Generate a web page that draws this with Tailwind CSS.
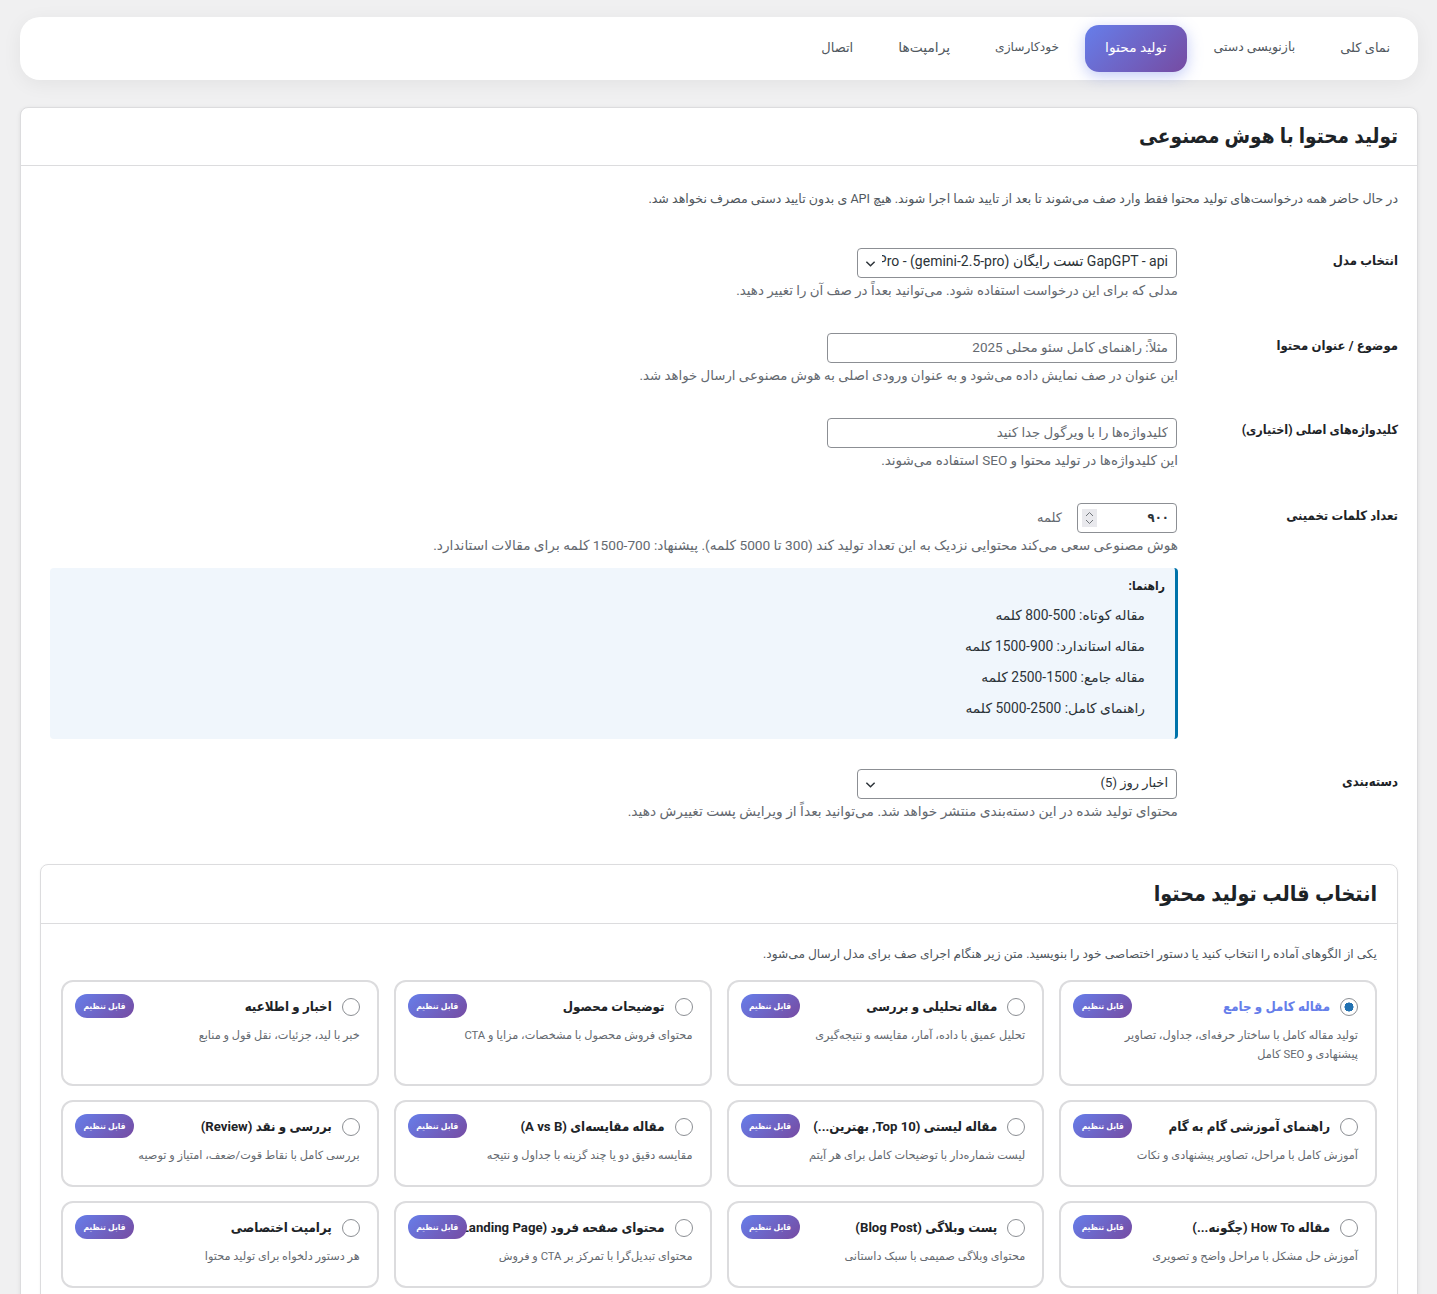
<!DOCTYPE html>
<html lang="fa" dir="rtl">
<head>
    <meta charset="UTF-8">
    <title>تولید محتوا با هوش مصنوعی</title>
    <script src="https://cdn.jsdelivr.net/npm/@tailwindcss/browser@4"></script>
</head>
<body class="bg-[#f0f0f1] h-[1294px] overflow-hidden font-['Roboto','DejaVu_Sans',sans-serif] text-[13px] text-[#3c434a]">
    <div class="pt-[17px] pr-[19px] pl-5">

        <!-- تب‌ها -->
        <nav class="bg-white rounded-[20px] p-2 h-[63px] flex gap-[5px] shadow-[0_4px_20px_rgba(0,0,0,0.06)]">
            <a class="px-5 pb-[2px] h-[47px] flex items-center text-[13px] text-[#50575e]">نمای کلی</a>
            <a class="px-5 pb-[2px] h-[47px] flex items-center text-[12.5px] text-[#50575e]">بازنویسی دستی</a>
            <a class="mr-[2px] ml-px px-5 pb-[2px] h-[47px] flex items-center text-[13.8px] text-white rounded-[14px] bg-[linear-gradient(135deg,#667eea,#764ba2)] shadow-[0_4px_15px_rgba(102,126,234,0.4)]">تولید محتوا</a>
            <a class="px-5 pb-[2px] h-[47px] flex items-center text-[12.2px] text-[#50575e]">خودکارسازی</a>
            <a class="px-5 pb-[2px] h-[47px] flex items-center text-[13.8px] text-[#50575e]">پرامپت‌ها</a>
            <a class="px-5 pb-[2px] h-[47px] flex items-center text-[13px] text-[#50575e]">اتصال</a>
        </nav>

        <!-- کارت اصلی -->
        <main class="mt-[27px] bg-white border border-[#dcdcde] rounded-lg shadow-[0_1px_4px_rgba(0,0,0,0.08)] h-[1300px]">
            <header class="h-[58px] pr-[19px] flex items-center border-b border-[#dcdcde]">
                <h2 class="text-[20.6px] font-bold font-['Roboto','DejaVu_Sans_Condensed','DejaVu_Sans',sans-serif] text-[#1d2327]">تولید محتوا با هوش مصنوعی</h2>
            </header>

            <div class="px-[19px]">
                <p class="mt-6 h-[18px] leading-[18px] text-[12.6px] text-[#50575e]">در حال حاضر همه درخواست‌های تولید محتوا فقط وارد صف می‌شوند تا بعد از تایید شما اجرا شوند. هیچ API ی بدون تایید دستی مصرف نخواهد شد.</p>

                <!-- مدل -->
                <div class="mt-[40px] flex">
                    <label class="w-[220px] shrink-0 pt-[3px] text-[13px] font-bold font-['Roboto','DejaVu_Sans_Condensed','DejaVu_Sans',sans-serif] text-[#1d2327]">انتخاب مدل</label>
                    <div class="flex-1 pl-[10px]">
                        <div class="relative w-[320px] mr-px">
                            <select class="appearance-none w-full h-[30px] pb-[3px] border border-[#8c8f94] rounded bg-white pr-2 pl-6 text-[14px] text-[#2c3338]">
                                <option>GapGPT - api تست رایگان Gemini 2.5 Pro - (gemini-2.5-pro)</option>
                            </select>
                            <svg class="absolute left-2 top-[10px] w-[11px] h-[11px] text-[#2c3338]" viewBox="0 0 12 12" fill="none" stroke="currentColor" stroke-width="1.6"><path d="M1.5 4 6 8.500 10.500 4"/></svg>
                        </div>
                        <p class="mt-1 h-[18px] leading-[18px] text-[13.4px] text-[#646970]">مدلی که برای این درخواست استفاده شود. می‌توانید بعداً در صف آن را تغییر دهید.</p>
                    </div>
                </div>

                <!-- موضوع -->
                <div class="mt-[33px] flex">
                    <label class="w-[220px] shrink-0 pt-[3px] text-[13px] font-bold font-['Roboto','DejaVu_Sans_Condensed','DejaVu_Sans',sans-serif] text-[#1d2327]">موضوع / عنوان محتوا</label>
                    <div class="flex-1 pl-[10px]">
                        <input type="text" placeholder="مثلاً: راهنمای کامل سئو محلی 2025" class="block w-[350px] mr-px h-[30px] px-2 pb-[3px] border border-[#8c8f94] rounded bg-white text-[13.5px] placeholder:text-[#646970]">
                        <p class="mt-1 h-[18px] leading-[18px] text-[13.3px] text-[#646970]">این عنوان در صف نمایش داده می‌شود و به عنوان ورودی اصلی به هوش مصنوعی ارسال خواهد شد.</p>
                    </div>
                </div>

                <!-- کلیدواژه -->
                <div class="mt-[33px] flex">
                    <label class="w-[220px] shrink-0 pt-[3px] text-[12.5px] font-bold font-['Roboto','DejaVu_Sans_Condensed','DejaVu_Sans',sans-serif] text-[#1d2327]">کلیدواژه‌های اصلی (اختیاری)</label>
                    <div class="flex-1 pl-[10px]">
                        <input type="text" placeholder="کلیدواژه‌ها را با ویرگول جدا کنید" class="block w-[350px] mr-px h-[30px] px-2 pb-[2px] border border-[#8c8f94] rounded bg-white text-[13.3px] placeholder:text-[#646970]">
                        <p class="mt-[3px] h-[18px] leading-[18px] text-[13.5px] text-[#646970]">این کلیدواژه‌ها در تولید محتوا و SEO استفاده می‌شوند.</p>
                    </div>
                </div>

                <!-- تعداد کلمات -->
                <div class="mt-[34px] flex">
                    <label class="w-[220px] shrink-0 pt-[3px] text-[13px] font-bold font-['Roboto','DejaVu_Sans_Condensed','DejaVu_Sans',sans-serif] text-[#1d2327]">تعداد کلمات تخمینی</label>
                    <div class="flex-1 pl-[10px]">
                        <div class="flex items-center gap-[15px] mr-px">
                            <div class="w-[100px] h-[30px] border border-[#8c8f94] rounded bg-white flex items-center justify-between pr-[7px] pl-1">
                                <span class="text-[13px] font-bold font-['Roboto','DejaVu_Sans_Condensed','DejaVu_Sans',sans-serif] text-[#2c3338]">۹۰۰</span>
                                <span class="w-[15px] h-[18px] bg-[#e9e9ed] flex flex-col items-center justify-center gap-[2px]">
                                    <svg class="w-[9px] h-[6px]" viewBox="0 0 9 6" fill="none" stroke="#70757a" stroke-width="1"><path d="M1 5 4.500 1.500 8 5"/></svg>
                                    <svg class="w-[9px] h-[6px]" viewBox="0 0 9 6" fill="none" stroke="#70757a" stroke-width="1"><path d="M1 1 4.500 4.500 8 1"/></svg>
                                </span>
                            </div>
                            <span class="text-[13px] text-[#646970]">کلمه</span>
                        </div>
                        <p class="mt-[3px] h-[18px] leading-[18px] text-[13.7px] text-[#646970] whitespace-nowrap">هوش مصنوعی سعی می‌کند محتوایی نزدیک به این تعداد تولید کند (300 تا 5000 کلمه). پیشنهاد: 700-1500 کلمه برای مقالات استاندارد.</p>
                        <div class="mt-[14px] h-[171px] bg-[#f0f6fc] border-r-[3px] border-[#0073aa] rounded pr-[10px] pt-[9px] text-[13.8px] text-[#2c3338]">
                            <strong class="block h-[18px] leading-[18px] text-[12px] font-['Roboto','DejaVu_Sans_Condensed','DejaVu_Sans',sans-serif] text-[#1d2327]">راهنما:</strong>
                            <ul class="mr-5 mt-[5px]">
                                <li class="h-[31px] leading-[31px]">مقاله کوتاه: 500-800 کلمه</li>
                                <li class="h-[31px] leading-[31px]">مقاله استاندارد: 900-1500 کلمه</li>
                                <li class="h-[31px] leading-[31px]">مقاله جامع: 1500-2500 کلمه</li>
                                <li class="h-[31px] leading-[31px]">راهنمای کامل: 2500-5000 کلمه</li>
                            </ul>
                        </div>
                    </div>
                </div>

                <!-- دسته‌بندی -->
                <div class="mt-[30px] flex">
                    <label class="w-[220px] shrink-0 pt-[3px] text-[13px] font-bold font-['Roboto','DejaVu_Sans_Condensed','DejaVu_Sans',sans-serif] text-[#1d2327]">دسته‌بندی</label>
                    <div class="flex-1 pl-[10px]">
                        <div class="relative w-[320px] mr-px">
                            <select class="appearance-none w-full h-[30px] pb-[2px] border border-[#8c8f94] rounded bg-white pr-2 pl-6 text-[13px] text-[#2c3338]">
                                <option>اخبار روز (5)</option>
                            </select>
                            <svg class="absolute left-2 top-[10px] w-[11px] h-[11px] text-[#2c3338]" viewBox="0 0 12 12" fill="none" stroke="currentColor" stroke-width="1.6"><path d="M1.5 4 6 8.500 10.500 4"/></svg>
                        </div>
                        <p class="mt-[3px] h-[18px] leading-[18px] text-[13.8px] text-[#646970]">محتوای تولید شده در این دسته‌بندی منتشر خواهد شد. می‌توانید بعداً از ویرایش پست تغییرش دهید.</p>
                    </div>
                </div>

                <!-- انتخاب قالب -->
                <section class="mt-[44px] border border-[#dcdcde] rounded-lg shadow-[0_1px_3px_rgba(0,0,0,0.05)]">
                    <header class="h-[59px] px-5 flex items-center border-b border-[#dcdcde]">
                        <h3 class="text-[21.4px] font-bold font-['Roboto','DejaVu_Sans_Condensed','DejaVu_Sans',sans-serif] text-[#1d2327]">انتخاب قالب تولید محتوا</h3>
                    </header>
                    <div class="px-5 pb-5">
                        <p class="mt-[21px] h-[18px] leading-[18px] text-[12.2px] text-[#50575e]">یکی از الگوهای آماده را انتخاب کنید یا دستور اختصاصی خود را بنویسید. متن زیر هنگام اجرای صف برای مدل ارسال می‌شود.</p>
                        <div id="templates" class="mt-[17px] grid grid-cols-4 gap-x-[15px] gap-y-[14.5px]"></div>
                    </div>
                </section>
            </div>
        </main>
    </div>

    <script>
        // قالب‌های تولید محتوا
        const templates = [
            ['مقاله کامل و جامع', 'تولید مقاله کامل با ساختار حرفه‌ای، جداول، تصاویر پیشنهادی و SEO کامل'],
            ['مقاله تحلیلی و بررسی', 'تحلیل عمیق با داده، آمار، مقایسه و نتیجه‌گیری'],
            ['توضیحات محصول', 'محتوای فروش محصول با مشخصات، مزایا و CTA'],
            ['اخبار و اطلاعیه', 'خبر با لید، جزئیات، نقل قول و منابع'],
            ['راهنمای آموزشی گام به گام', 'آموزش کامل با مراحل، تصاویر پیشنهادی و نکات'],
            ['مقاله لیستی (Top 10, بهترین...)', 'لیست شماره‌دار با توضیحات کامل برای هر آیتم'],
            ['مقاله مقایسه‌ای (A vs B)', 'مقایسه دقیق دو یا چند گزینه با جداول و نتیجه'],
            ['بررسی و نقد (Review)', 'بررسی کامل با نقاط قوت/ضعف، امتیاز و توصیه'],
            ['مقاله How To (چگونه...)', 'آموزش حل مشکل با مراحل واضح و تصویری'],
            ['پست وبلاگی (Blog Post)', 'محتوای وبلاگی صمیمی با سبک داستانی'],
            ['محتوای صفحه فرود (Landing Page)', 'محتوای تبدیل‌گرا با تمرکز بر CTA و فروش'],
            ['پرامپت اختصاصی', 'هر دستور دلخواه برای تولید محتوا']
        ];

        document.getElementById('templates').innerHTML = templates.map(([title, desc], i) => `
            <label class="relative min-h-[86px] border-2 border-[#dcdcde] rounded-xl bg-white pt-[15px] pr-[17px] pl-4 pb-[19.5px]">
                <span class="flex items-center gap-[10px] h-5 text-[13.2px] font-bold font-['Roboto','DejaVu_Sans_Condensed','DejaVu_Sans',sans-serif] whitespace-nowrap ${i === 0 ? 'text-[#667eea]' : 'text-[#1d2327]'}">
                    <input type="radio" name="tpl" ${i === 0 ? 'checked' : ''} class="appearance-none shrink-0 w-[18px] h-[18px] rounded-full border border-[#8c8f94] bg-white checked:bg-[radial-gradient(circle,#2271b1_38%,white_42%)]">${title}
                </span>
                <span class="block pt-[9px] pl-5 text-[11.3px] leading-[19px] text-[#646970]">${desc}</span>
                <span class="absolute left-3 top-3 w-[59px] h-6 flex items-center justify-center rounded-xl bg-[linear-gradient(135deg,#667eea,#764ba2)] text-white text-[8.5px] font-bold font-['Roboto','DejaVu_Sans_Condensed','DejaVu_Sans',sans-serif]">قابل تنظیم</span>
            </label>`).join('');
    </script>
</body>
</html>
